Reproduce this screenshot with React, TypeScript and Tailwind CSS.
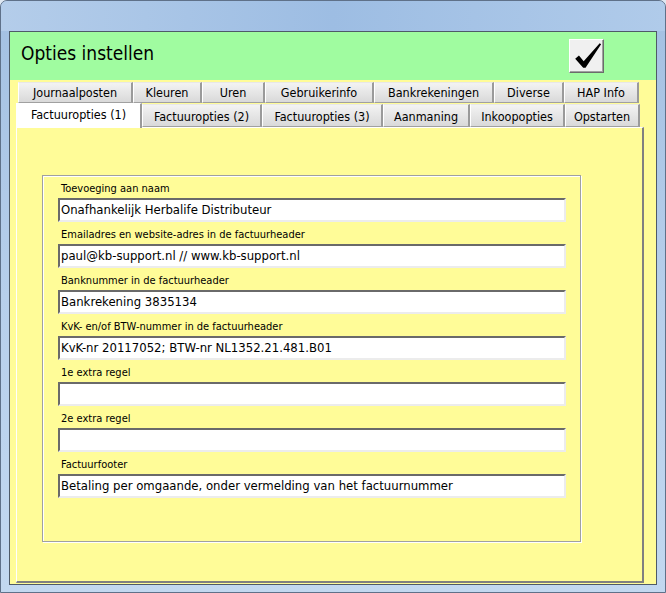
import { memo } from 'react'

const FONT = '[font-family:"DejaVu_Sans_Condensed","DejaVu_Sans",Tahoma,sans-serif]'

const topTabs = [
  { label: 'Journaalposten', w: 'w-[115px]' },
  { label: 'Kleuren', w: 'w-[69px]' },
  { label: 'Uren', w: 'w-[63px]' },
  { label: 'Gebruikerinfo', w: 'w-[109px]' },
  { label: 'Bankrekeningen', w: 'w-[120px]' },
  { label: 'Diverse', w: 'w-[70px]' },
  { label: 'HAP Info', w: 'w-[75px]' },
]

const bottomTabs = [
  { label: 'Factuuropties (1)', w: 'w-[126px]', active: true },
  { label: 'Factuuropties (2)', w: 'w-[120px]' },
  { label: 'Factuuropties (3)', w: 'w-[121px]' },
  { label: 'Aanmaning', w: 'w-[87px]' },
  { label: 'Inkoopopties', w: 'w-[95px]' },
  { label: 'Opstarten', w: 'w-[75px]' },
]

const fields = [
  { label: 'Toevoeging aan naam', value: 'Onafhankelijk Herbalife Distributeur' },
  { label: 'Emailadres en website-adres in de factuurheader', value: 'paul@kb-support.nl // www.kb-support.nl' },
  { label: 'Banknummer in de factuurheader', value: 'Bankrekening 3835134' },
  { label: 'KvK- en/of BTW-nummer in de factuurheader', value: 'KvK-nr 20117052; BTW-nr NL1352.21.481.B01' },
  { label: '1e extra regel', value: '' },
  { label: '2e extra regel', value: '' },
  { label: 'Factuurfooter', value: 'Betaling per omgaande, onder vermelding van het factuurnummer' },
]

export default function App() {
  return (
    <div className={`w-[666px] h-[593px] bg-[#dfe8f2] ${FONT}`}>
      <div className="w-[666px] h-[593px] flex flex-col rounded-t-[7px] border border-[#5f7189] bg-gradient-to-b from-[#a3c0e2] via-[#b7cfeb] to-[#c2d8f0] overflow-hidden">
        {/* glass title bar, no caption */}
        <div className="h-[30px] shrink-0 bg-gradient-to-r from-[#b4cdea] via-[#9dbde3] to-[#b0cbea]" />

        <div className="mx-[8px] flex-1 flex flex-col border border-[#4e5a68] min-h-0">
          <div className="h-[48px] shrink-0 bg-[#a0fca0] flex items-start justify-between pl-[11px] pr-[52px]">
            <h1 className="mt-[8px] text-[19px] leading-[26px] text-black">Opties instellen</h1>
            <button className="mt-[7px] w-[35px] h-[34px] bg-[#f0f0f0] border border-t-white border-l-white border-r-[#6b6b6b] border-b-[#6b6b6b] shadow-[inset_-1px_-1px_0_#a0a0a0] flex items-center justify-center">
              <svg width="35" height="34" viewBox="0 0 35 34">
                <path d="M5.5 20 L9.5 16.5 L14.5 22.5 L31.5 3.5 L33 4.5 L16.5 29.5 L14 29.5 Z" fill="#000" />
              </svg>
            </button>
          </div>

          <div className="flex-1 flex flex-col bg-[#fffc98] pl-[6px] pr-[12px] pt-[2px] pb-[1px] min-h-0">
            <div className="flex ml-[2px] h-[21px] shrink-0">
              {topTabs.map((t) => (
                <Tab key={t.label} label={t.label} w={t.w} />
              ))}
            </div>
            <div className="flex h-[24px] shrink-0 items-start relative z-10">
              {bottomTabs.map((t) =>
                t.active ? (
                  <div
                    key={t.label}
                    className={`${t.w} h-[25px] bg-white border-l border-t border-white border-r-2 border-r-[#9a9a9a] flex items-center justify-center pb-[2px] text-[12.5px] text-black`}
                  >
                    {t.label}
                  </div>
                ) : (
                  <Tab key={t.label} label={t.label} w={t.w} lower />
                )
              )}
            </div>

            <div className="flex-1 border-l border-t border-white border-r-2 border-b-2 border-r-[#808080] border-b-[#808080] pt-[47px] pl-[25px]">
              <div className="w-[539px] h-[367px] border border-[#a0a0a0] shadow-[inset_1px_1px_0_#fff,1px_1px_0_#fff] pt-[4px]">
                {fields.map((f) => (
                  <Field key={f.label} label={f.label} value={f.value} />
                ))}
              </div>
            </div>
          </div>
        </div>

        <div className="h-[7px] shrink-0" />
      </div>
    </div>
  )
}

function Tab({ label, w, lower }: { label: string; w: string; lower?: boolean }) {
  return (
    <div
      className={`${w} ${lower ? 'h-[23px] mt-[1px] pt-[3px]' : 'h-[21px] pt-[2px]'} shrink-0 bg-gradient-to-b from-[#f3f3f3] to-[#d9d9d9] border-l border-t border-l-white border-t-[#e8e8e8] border-r-2 border-r-[#9a9a9a] border-b border-b-[#a0a0a0] flex items-center justify-center text-[12.5px] text-black`}
    >
      {label}
    </div>
  )
}

const Field = memo(function Field({ label, value }: { label: string; value: string }) {
  return (
    <div className="pl-[15px] mb-[4px]">
      <div className="pl-[3px] h-[18px] text-[11px] leading-[18px] text-black">{label}</div>
      <div className="w-[508px] h-[24px] bg-white border-2 border-t-[#6a6a6a] border-l-[#6a6a6a] border-r-[#ececec] border-b-[#ececec] pl-[1px] text-[13px] leading-[20px] text-black whitespace-nowrap overflow-hidden">
        {value}
      </div>
    </div>
  )
})
